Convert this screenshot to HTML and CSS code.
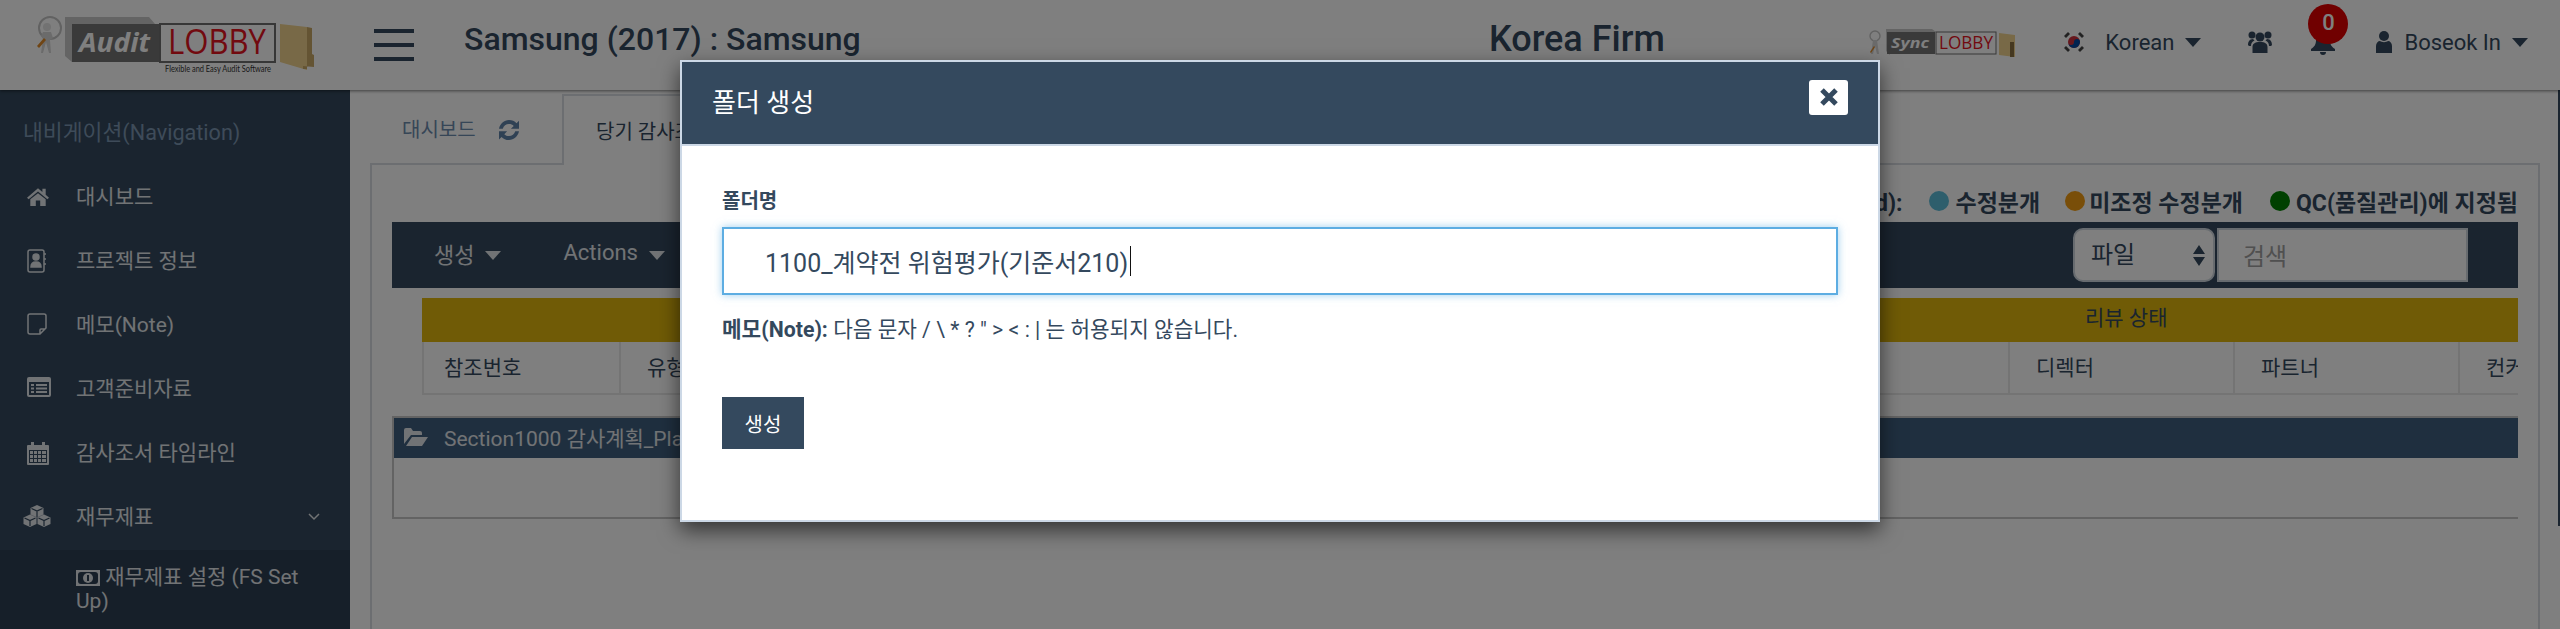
FILE: index.html
```html
<!DOCTYPE html>
<html lang="ko" dir="ltr">
    <head>
        <meta charset="utf-8">
        <title>Audit Lobby</title>
        <link rel="stylesheet" href="styles.css">
    </head>
    <body>
        <div class="page">
            <header class="topbar">
                <svg class="logo" viewBox="0 0 280 60" width="280" height="60">
                    <circle cx="14" cy="13" r="11" fill="none" stroke="#c4c4c4" stroke-width="2"/>
                    <circle cx="11" cy="12" r="4" fill="#e4e4e4"/>
                    <path d="M7 17h8l2 6-3 2 1 13h-2l-3-11-3 11H5l2-14-2-3z" fill="#d6d6d6"/>
                    <path d="M1 31l7-8 2 2-7 8z" fill="#e08a28"/>
                    <path d="M29 2h84l6 7H36v38l-7-6z" fill="#c8c8c8"/>
                    <rect x="36" y="9" width="88" height="38" fill="#747474"/>
                    <rect x="124" y="9" width="115" height="38" fill="#fff" stroke="#6f6f6f" stroke-width="2"/>
                    <text x="43" y="37" class="logo-audit" textLength="71" lengthAdjust="spacingAndGlyphs">Audit</text>
                    <text x="132" y="39" class="logo-lobby" textLength="98" lengthAdjust="spacingAndGlyphs">LOBBY</text>
                    <text x="129" y="57" class="logo-tag" textLength="106" lengthAdjust="spacingAndGlyphs">Flexible and Easy Audit Software</text>
                    <path d="M244 9l27 3v43l-27-8z" fill="#f0d28e"/>
                    <path d="M271 12l5 1v26l2 1v12l-11-1v3h4z" fill="#c9a866"/>
                </svg>
                <div class="burger"><span></span><span></span><span></span></div>
                <div class="client">Samsung (2017) : Samsung</div>
                <div class="firm">Korea Firm</div>
                <div class="topright">
                    <svg class="sync" viewBox="0 0 148 30" width="148" height="30">
                        <circle cx="6" cy="8" r="5" fill="none" stroke="#c4c4c4" stroke-width="1.400"/>
                        <path d="M4 12h4l2 14H8l-2-8-2 8H2z" fill="#d6d6d6"/>
                        <path d="M1 24l4-6 1 1-4 6z" fill="#e08a28"/>
                        <path d="M17 1h46l4 3H21v23l-4-4z" fill="#c8c8c8"/>
                        <rect x="18" y="4" width="48" height="22" fill="#747474"/>
                        <rect x="67" y="4" width="60" height="22" fill="#fff" stroke="#6f6f6f"/>
                        <text x="22" y="20" class="sync-name" textLength="38" lengthAdjust="spacingAndGlyphs">Sync</text>
                        <text x="70" y="21" class="sync-lobby" textLength="54" lengthAdjust="spacingAndGlyphs">LOBBY</text>
                        <path d="M130 5l16 2v22l-16-2z" fill="#f0d28e"/>
                        <path d="M141 14h4v15h-4z" fill="#8a7040"/>
                    </svg>
                    <svg class="flag" viewBox="0 0 24 24" width="24" height="24">
                        <rect width="24" height="24" fill="#fff"/>
                        <circle cx="12" cy="12" r="6" fill="#cd2e3a"/>
                        <path d="M6 12a6 6 0 0 0 12 0 3 3 0 0 0-6 0 3 3 0 0 1-6 0z" fill="#0047a0"/>
                        <path d="M2 6l4-4 2 2-4 4zM18 2l4 4-2 2-4-4zM2 18l2-2 4 4-2 2zM16 20l4-4 2 2-4 4z" fill="#444"/>
                    </svg>
                    <span class="lang">Korean</span><i class="caret caret-lang"></i>
                    <svg class="ico-users" viewBox="0 0 24 22" width="24" height="22" fill="currentColor">
                        <circle cx="12" cy="6" r="4.500"/><circle cx="4" cy="4" r="3.500"/><circle cx="20" cy="4" r="3.500"/>
                        <path d="M4.500 22v-6c0-3 2-5 7.500-5s7.500 2 7.500 5v6zM0 14c0-3 1.500-6 5-6l1.500 1.500C4 10.500 3 12.500 3 15H1zM24 14c0-3-1.500-6-5-6l-1.500 1.500c2.500 1 3.500 3 3.500 5.500h2z"/>
                    </svg>
                    <div class="bell">
                        <svg viewBox="0 0 24 24" width="24" height="24" fill="currentColor">
                            <path d="M12 1c5 0 7 3 7 8 0 5 2 7 5 9v2H0v-2c3-2 5-4 5-9 0-5 2-8 7-8zM9 21h6a3 3 0 0 1-6 0z"/>
                        </svg>
                        <span class="badge">0</span>
                    </div>
                    <svg class="ico-user" viewBox="0 0 16 22" width="16" height="22" fill="currentColor">
                        <circle cx="8" cy="5" r="5"/><path d="M0 22v-7c0-3 2-5 4-5 2 1.500 6 1.500 8 0 2 0 4 2 4 5v7z"/>
                    </svg>
                    <span class="username">Boseok In</span><i class="caret caret-user"></i>
                </div>
            </header>
            <div class="layout">
                <nav class="sidebar">
                    <div class="nav-title">내비게이션(Navigation)</div>
                    <ul class="nav">
                        <li><svg viewBox="0 0 20 20" width="22" height="22" fill="currentColor"><path d="M10 3L0 11.500l1.500 1.500L10 6l8.500 7 1.500-1.500-3-2.600V3.500h-3v2.800zM3 13l7-5.500 7 5.500v6h-5v-5H8v5H3z"/></svg>대시보드</li>
                        <li><svg viewBox="0 0 20 24" width="20" height="24" fill="none" stroke="currentColor" stroke-width="1.500"><rect x="1" y="1" width="16" height="22" rx="2"/><circle cx="9" cy="8" r="3" fill="currentColor"/><path d="M4 18c0-4 2-5 5-5s5 1 5 5z" fill="currentColor"/><path d="M17 5h2M17 10h2M17 15h2"/></svg>프로젝트 정보</li>
                        <li><svg viewBox="0 0 20 22" width="20" height="22" fill="none" stroke="currentColor" stroke-width="1.500"><path d="M3 1h14a2 2 0 0 1 2 2v12l-6 6H3a2 2 0 0 1-2-2V3a2 2 0 0 1 2-2zM18 16h-4a1 1 0 0 0-1 1v4"/></svg>메모(Note)</li>
                        <li><svg viewBox="0 0 24 20" width="24" height="20" fill="currentColor"><path fill-rule="evenodd" d="M2 0h20a2 2 0 0 1 2 2v16a2 2 0 0 1-2 2H2a2 2 0 0 1-2-2V2a2 2 0 0 1 2-2zM2 5v13h20V5zM4 7h3v2H4zM9 7h11v2H9zM4 10.500h3v2H4zM9 10.500h11v2H9zM4 14h3v2H4zM9 14h11v2H9z"/></svg>고객준비자료</li>
                        <li><svg viewBox="0 0 22 24" width="22" height="24" fill="currentColor"><path fill-rule="evenodd" d="M1 4h3V1h3v3h8V1h3v3h3a1 1 0 0 1 1 1v18a1 1 0 0 1-1 1H1a1 1 0 0 1-1-1V5a1 1 0 0 1 1-1zM2 9v13h18V9zM3 10h3v3H3zM7 10h3v3H7zM11 10h3v3h-3zM15 10h4v3h-4zM3 14h3v3H3zM7 14h3v3H7zM11 14h3v3h-3zM15 14h4v3h-4zM3 18h3v3H3zM7 18h3v3H7zM11 18h3v3h-3zM15 18h4v3h-4z"/></svg>감사조서 타임라인</li>
                        <li class="has-sub"><svg class="ico-cubes" viewBox="0 0 28 22" width="28" height="22"><path fill="currentColor" d="M14 0l6.500 3v6.500L14 12.500l-6.500-3V3zM7 9.500l6.500 3V19L7 22l-6.500-3v-6.500zM21 9.500l6.500 3V19L21 22l-6.500-3v-6.500z"/><path fill="none" stroke="#34495e" stroke-width="1.200" d="M8.500 3.500L14 6l5.500-2.500M14 6v6M1.500 13L7 15.500l5.500-2.500M7 15.500V21M15.500 13l5.500 2.500 5.500-2.500M21 15.500V21"/></svg>재무제표<svg class="chevron" viewBox="0 0 12 8" width="12" height="8" fill="none" stroke="currentColor" stroke-width="1.500"><path d="M1 1l5 5 5-5"/></svg></li>
                    </ul>
                    <div class="subnav">
                        <svg viewBox="0 0 24 16" width="24" height="16"><rect width="24" height="16" fill="currentColor"/><rect x="2" y="2" width="20" height="12" rx="3" fill="#2c3e52"/><circle cx="12" cy="8" r="5" fill="currentColor"/><path d="M11 5h2v6h-2z" fill="#2c3e52"/></svg>
                        재무제표 설정 (FS Set Up)
                    </div>
                </nav>
                <main class="content">
                    <div class="tabs">
                        <div class="tab">대시보드<svg class="ico-refresh" viewBox="2 2 16 16" width="20" height="20" fill="currentColor"><path d="M10 2c2.500 0 4.500 1 6 2.500L18 2.500V9h-6.500l2.300-2.300C12.800 5.700 11.500 5.200 10 5.200c-2.400 0-4.300 1.300-5 3.800H2C2.900 4.800 6 2 10 2zM2 11h6.500l-2.300 2.300c1 1 2.300 1.500 3.800 1.500 2.400 0 4.300-1.300 5-3.800H18c-.9 4.200-4 7-8 7-2.500 0-4.500-1-6-2.500L2 17.500z"/></svg></div>
                        <div class="tab tab-active">당기 감사조서</div>
                    </div>
                    <section class="panel">
                        <div class="legend">
                            <b>범례(Legend):</b>
                            <i class="dot dot-blue"></i><b>수정분개</b>
                            <i class="dot dot-orange"></i><b>미조정 수정분개</b>
                            <i class="dot dot-green"></i><b>QC(품질관리)에 지정됨</b>
                        </div>
                        <div class="toolbar">
                            <span class="tool">생성</span><i class="caret"></i>
                            <span class="tool tool-actions">Actions</span><i class="caret"></i>
                            <div class="search">
                                <div class="select"><span class="select-text">파일</span><svg viewBox="0 0 12 24" width="12" height="24" fill="currentColor"><path d="M6 2l6 9H0zM0 14h12l-6 9z"/></svg></div>
                                <div class="search-box">검색</div>
                            </div>
                        </div>
                        <div class="table-head">
                            <div class="review">리뷰 상태</div>
                        </div>
                        <div class="table-row">
                            <div class="cell cell-ref">참조번호</div>
                            <div class="cell cell-grow">유형</div>
                            <div class="cell cell-role">디렉터</div>
                            <div class="cell cell-role">파트너</div>
                            <div class="cell cell-last">컨커런트</div>
                        </div>
                        <div class="section">
                            <div class="section-head">
                                <svg viewBox="0 0 24 20" width="24" height="20" fill="currentColor"><path d="M0 17V3a2 2 0 0 1 2-2h5l2 3h7a2 2 0 0 1 2 2v2H7L0 17zM2 19l6-9h16l-6 9z"/></svg>
                                Section1000 감사계획_Planning
                            </div>
                        </div>
                    </section>
                </main>
                <div class="edge"></div>
            </div>
            <div class="overlay">
                <div class="modal">
                    <div class="modal-head">
                        <h4>폴더 생성</h4>
                        <button class="close"><svg viewBox="0 0 20 20" width="20" height="20" fill="none" stroke="#34495e" stroke-width="5"><path d="M3 3l14 14M17 3L3 17"/></svg></button>
                    </div>
                    <div class="modal-body">
                        <label for="foldername">폴더명</label>
                        <div class="input-mock" id="foldername">1100_계약전 위험평가(기준서210)<span class="cursor"></span></div>
                        <p class="note"><b>메모(Note):</b> 다음 문자 / \ * ? " &gt; &lt; : | 는 허용되지 않습니다.</p>
                        <button class="create">생성</button>
                    </div>
                </div>
            </div>
        </div>
    </body>
</html>
```

FILE: styles.css
```css
*{
    box-sizing: border-box;
}
body, html{
    margin: 0;
    height: 100%;
    overflow: hidden;
    font: 21px Roboto, "Noto Sans CJK KR", sans-serif;
    color: #34495e;
    background: #fff;
}
.page{
    position: relative;
    height: 629px;
    overflow: hidden;
}
.caret{
    display: inline-block;
    width: 0;
    height: 0;
    border-left: 8px solid transparent;
    border-right: 8px solid transparent;
    border-top: 9px solid currentColor;
}

/* top bar */
.topbar{
    display: flex;
    align-items: center;
    height: 90px;
    background: #fff;
    box-shadow: 0 1px 3px rgba(0,0,0,.5);
    position: relative;
}
.logo{
    margin-left: 36px;
    flex: none;
}
.logo-audit{
    font: italic bold 27px "Open Sans", sans-serif;
    fill: #fff;
}
.logo-lobby{
    font: 34px "Open Sans", sans-serif;
    fill: #e4141e;
}
.logo-tag{
    font: 9px Lato, sans-serif;
    fill: #333;
}
.sync-name{
    font: italic bold 15px "Open Sans", sans-serif;
    fill: #fff;
}
.sync-lobby{
    font: 19px "Open Sans", sans-serif;
    fill: #e4141e;
}
.burger{
    width: 40px;
    margin-left: 58px;
    display: flex;
    flex-direction: column;
    gap: 10px;
    flex: none;
}
.burger span{
    height: 4px;
    background: #34495e;
}
.client{
    margin: 0 0 12px 50px;
    width: 840px;
    flex: none;
    font-size: 32px;
    font-weight: 500;
}
.firm{
    width: 178px;
    flex: none;
    margin: 0 0 12px 185px;
    font-size: 36px;
    font-weight: 500;
    white-space: nowrap;
}
.topright{
    display: flex;
    align-items: center;
    margin: 0 32px 6px auto;
    font-size: 22px;
}
.sync{
    flex: none;
    margin-top: 2px;
}
.flag{
    margin-left: 45px;
    border-radius: 50%;
}
.lang{
    margin-left: 19px;
}
.caret-lang{
    margin-left: 11px;
}
.ico-users{
    margin-left: 47px;
}
.bell{
    position: relative;
    margin-left: 39px;
    height: 24px;
    margin-top: 2px;
}
.badge{
    position: absolute;
    left: -3px;
    top: -27px;
    width: 40px;
    height: 40px;
    border-radius: 50%;
    background: #e00000;
    color: #fff;
    font-weight: 500;
    text-align: center;
    line-height: 37px;
}
.ico-user{
    margin-left: 41px;
}
.username{
    margin-left: 12px;
}
.caret-user{
    margin-left: 11px;
}

/* sidebar */
.layout{
    display: flex;
    height: 539px;
}
.sidebar{
    width: 350px;
    flex: none;
    background: #34495e;
    color: #e2e6ea;
}
.nav-title{
    padding: 25px 0 0 23px;
    height: 73px;
    color: #7d97b3;
    font-size: 21.600px;
}
.nav{
    list-style: none;
    margin: 0;
    padding: 0;
}
.nav li{
    position: relative;
    display: flex;
    align-items: center;
    height: 64px;
    padding-left: 76px;
}
.nav li svg{
    position: absolute;
    left: 27px;
    top: 22px;
}
.nav li .ico-cubes{
    left: 23px;
}
.nav li .chevron{
    left: 308px;
    top: 30px;
}
.subnav{
    background: #2c3e52;
    padding: 15px 40px 0 76px;
    line-height: 24px;
    height: 100px;
    margin-top: 3px;
}
.subnav svg{
    vertical-align: -2px;
}

/* main area */
.content{
    flex: 1;
    min-width: 0;
    padding: 4px 18px 0 20px;
    background: #fff;
}
.edge{
    width: 2px;
    height: 436px;
    flex: none;
    background: #34495e;
}
.tabs{
    display: flex;
    height: 69px;
}
.tab{
    width: 192px;
    padding: 20px 0 0 32px;
    color: #6d8cae;
    font-size: 20px;
}
.tab-active{
    width: 300px;
    color: #34495e;
    border: 2px solid #d8dde2;
    border-bottom: 0;
    background: #fff;
    height: 71px;
    position: relative;
}
.ico-refresh{
    margin-left: 23px;
    vertical-align: -3px;
    color: #5f82a8;
}
.panel{
    border: 2px solid #d8dde2;
    border-bottom: 0;
    height: 470px;
    padding: 19px 20px 0;
}
.legend{
    display: flex;
    align-items: center;
    justify-content: flex-end;
    height: 36px;
    margin-bottom: 2px;
    padding-bottom: 2px;
    white-space: nowrap;
    font-size: 23px;
}
.dot{
    width: 20px;
    height: 20px;
    border-radius: 50%;
    margin: 0 6px 0 27px;
}
.dot-blue{
    background: #5dbcd9;
}
.dot-orange{
    background: #f39c12;
    margin: 0 4px 0 25px;
}
.dot-green{
    background: #008000;
}
.toolbar{
    display: flex;
    align-items: center;
    height: 66px;
    background: #34495e;
    color: #e2e6ea;
    padding-left: 42px;
    font-size: 22px;
}
.toolbar .caret{
    margin-left: 11px;
}
.tool{
    margin-bottom: 5px;
}
.tool-actions{
    margin-left: 62px;
}
.search{
    display: flex;
    margin-left: auto;
    margin-right: 50px;
    color: #34495e;
}
.select{
    display: flex;
    align-items: center;
    justify-content: space-between;
    width: 142px;
    height: 54px;
    padding: 0 8px 0 16px;
    background: #fff;
    border: 2px solid #cfd6de;
    border-radius: 10px;
    font-size: 24px;
}
.select-text{
    margin-bottom: 5px;
}
.search-box{
    width: 251px;
    height: 54px;
    margin-left: 2px;
    padding: 7px 24px;
    background: #fff;
    border: 2px solid #cfd6de;
    color: #a0a0a0;
    font-size: 24px;
}
.table-head{
    margin: 10px 0 0 30px;
    height: 44px;
    background: #e0b70c;
    position: relative;
}
.review{
    position: absolute;
    left: 1663px;
    top: 3px;
}
.table-row{
    display: flex;
    height: 53px;
    margin-left: 30px;
    border: 2px solid #e8e8e8;
    border-top: 0;
    border-right: 0;
    overflow: hidden;
    white-space: nowrap;
}
.cell{
    padding: 9px 26px 0;
    border-right: 2px solid #e8e8e8;
    flex: none;
}
.cell-ref{
    width: 197px;
    padding-left: 20px;
}
.cell-grow{
    width: 1389px;
    padding-left: 26px;
}
.cell-role{
    width: 225px;
}
.cell-last{
    border-right: 0;
}
.section{
    margin-top: 21px;
    height: 103px;
    border: solid #c6c6c6;
    border-width: 2px 0 2px 2px;
}
.section-head{
    display: flex;
    align-items: center;
    gap: 16px;
    height: 40px;
    padding: 0 0 3px 10px;
    background: #3e5e7e;
    color: #e2e6ea;
    white-space: nowrap;
}

/* dialog */
.overlay{
    position: absolute;
    left: 0;
    top: 0;
    right: 0;
    bottom: 0;
    background: rgba(0,0,0,.5);
    display: flex;
    justify-content: center;
    padding-top: 60px;
}
.modal{
    width: 1200px;
    height: 462px;
    background: #fff;
    border: 2px solid #ccd8e6;
    box-shadow: 0 8px 20px rgba(0,0,0,.6);
}
.modal-head{
    display: flex;
    align-items: center;
    justify-content: space-between;
    height: 84px;
    padding: 0 30px 0 30px;
    background: #34495e;
    border-bottom: 2px solid #ccd8e6;
    color: #fff;
}
.modal-head h4{
    margin: 0 0 5px;
    font-size: 26px;
    font-weight: 400;
}
.close{
    width: 39px;
    height: 35px;
    padding: 0;
    margin-bottom: 12px;
    border: 0;
    border-radius: 3px;
    background: #fff;
    display: flex;
    align-items: center;
    justify-content: center;
}
.modal-body{
    padding: 40px 40px 0;
}
.modal-body label{
    display: block;
    font-size: 20px;
    font-weight: 700;
    line-height: 30px;
    margin-bottom: 11px;
}
.input-mock{
    display: flex;
    align-items: center;
    height: 68px;
    padding-left: 41px;
    border: 2px solid #5dade2;
    box-shadow: 0 0 8px rgba(93,173,226,.6);
    font-size: 25px;
}
.cursor{
    width: 1px;
    height: 30px;
    background: #111;
    margin-left: 2px;
}
.note{
    margin: 21px 0 53px;
    line-height: 28px;
    font-size: 21.300px;
}
.create{
    display: block;
    width: 82px;
    height: 52px;
    border: 0;
    background: #34495e;
    color: #fff;
    font: 20px Roboto, "Noto Sans CJK KR", sans-serif;
}
```
